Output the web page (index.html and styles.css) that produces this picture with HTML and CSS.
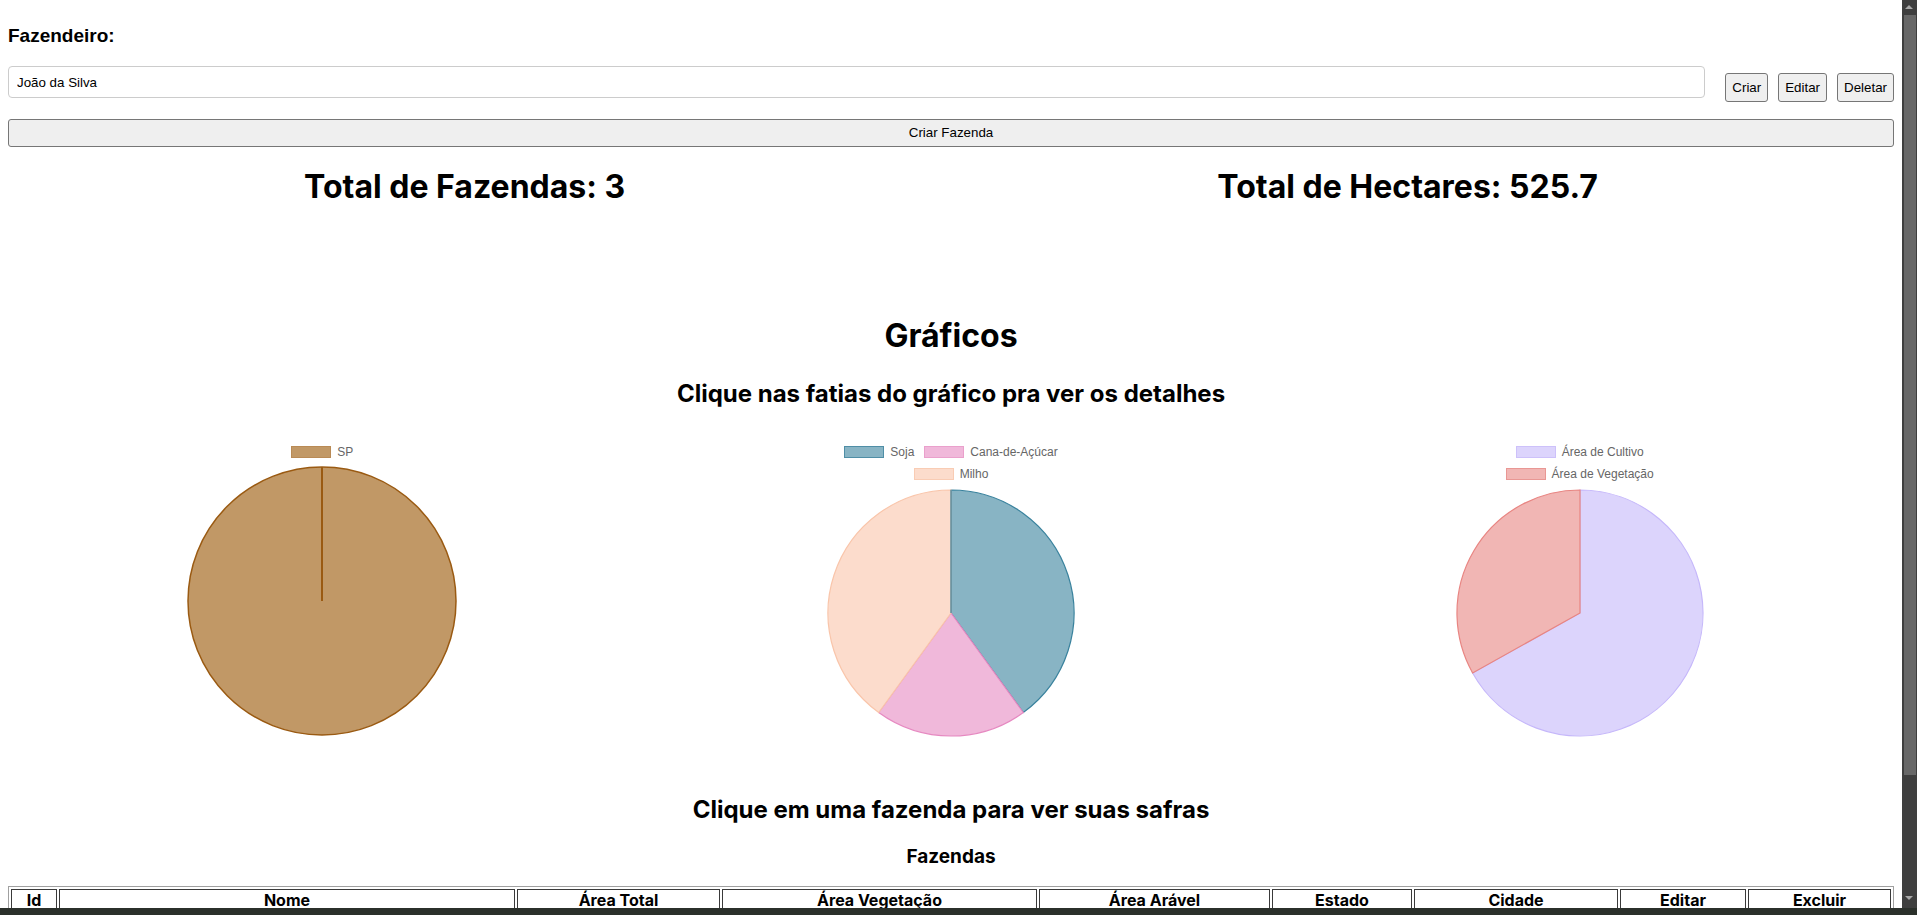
FILE: index.html
```html
<!DOCTYPE html>
<html lang="pt-BR">
<head>
<meta charset="utf-8">
<title>Fazendas</title>
<link rel="stylesheet" href="styles.css">
</head>
<body>
<div class="page">
  <div class="farmer-label">Fazendeiro:</div>
  <div class="farmer-row">
    <input class="farmer-input" type="text" value="João da Silva">
    <button class="btn">Criar</button>
    <button class="btn">Editar</button>
    <button class="btn">Deletar</button>
  </div>
  <button class="btn btn-wide">Criar Fazenda</button>

  <div class="stats">
    <h1 class="stat">Total de Fazendas: 3</h1>
    <h1 class="stat">Total de Hectares: 525.7</h1>
  </div>

  <h2 class="section-title">Gráficos</h2>
  <h3 class="section-sub">Clique nas fatias do gráfico pra ver os detalhes</h3>

  <div class="charts">
    <div class="chart">
      <div class="legend">
        <div class="legend-item"><span class="swatch sw-sp"></span>SP</div>
      </div>
      <svg class="pie pie-lg" viewBox="-135 -135 270 270">
        <circle cx="0" cy="0" r="134" fill="#c19866" stroke="#9a5a12" stroke-width="1.5"/>
        <line x1="0" y1="0" x2="0" y2="-134" stroke="#9a5a12" stroke-width="2"/>
      </svg>
    </div>
    <div class="chart">
      <div class="legend">
        <div class="legend-item"><span class="swatch sw-soja"></span>Soja</div>
        <div class="legend-item"><span class="swatch sw-cana"></span>Cana-de-Açúcar</div>
        <div class="legend-item"><span class="swatch sw-milho"></span>Milho</div>
      </div>
      <svg class="pie pie-sm" viewBox="-124 -124 248 248">
        <path d="M0 0 L0 -123 A123 123 0 0 1 72.3 99.5 Z" fill="#88b4c4" stroke="#39829d" stroke-width="1.2"/>
        <path d="M0 0 L72.3 99.5 A123 123 0 0 1 -72.3 99.5 Z" fill="#f0b8da" stroke="#e689c1" stroke-width="1.2"/>
        <path d="M0 0 L-72.3 99.5 A123 123 0 0 1 0 -123 Z" fill="#fcdccc" stroke="#f9c5aa" stroke-width="1.2"/>
        <line x1="0" y1="0" x2="0" y2="-123" stroke="#39829d" stroke-width="1.2"/>
      </svg>
    </div>
    <div class="chart">
      <div class="legend">
        <div class="legend-item"><span class="swatch sw-cult"></span>Área de Cultivo</div>
        <div class="legend-item"><span class="swatch sw-veg"></span>Área de Vegetação</div>
      </div>
      <svg class="pie pie-sm" viewBox="-124 -124 248 248">
        <path d="M0 0 L0 -123 A123 123 0 1 1 -107.4 60.0 Z" fill="#dcd4fc" stroke="#c5b7fa" stroke-width="1.2"/>
        <path d="M0 0 L-107.4 60.0 A123 123 0 0 1 0 -123 Z" fill="#f1b6b4" stroke="#e88582" stroke-width="1.2"/>
      </svg>
    </div>
  </div>

  <h3 class="section-sub table-intro">Clique em uma fazenda para ver suas safras</h3>
  <h4 class="table-title">Fazendas</h4>

  <table class="farms">
    <colgroup>
      <col class="c-id"><col class="c-nome"><col class="c-total"><col class="c-veg"><col class="c-ara"><col class="c-est"><col class="c-cid"><col class="c-edit"><col class="c-del">
    </colgroup>
    <thead>
      <tr>
        <th>Id</th><th>Nome</th><th>Área Total</th><th>Área Vegetação</th><th>Área Arável</th><th>Estado</th><th>Cidade</th><th>Editar</th><th>Excluir</th>
      </tr>
    </thead>
    <tbody>
      <tr><td>1</td><td>Fazenda Boa Vista</td><td>200.5</td><td>60</td><td>140.5</td><td>SP</td><td>Ribeirão Preto</td><td><button class="btn">Editar</button></td><td><button class="btn">Excluir</button></td></tr>
      <tr><td>2</td><td>Fazenda Santa Clara</td><td>175.2</td><td>55</td><td>120.2</td><td>SP</td><td>Campinas</td><td><button class="btn">Editar</button></td><td><button class="btn">Excluir</button></td></tr>
      <tr><td>3</td><td>Fazenda São José</td><td>150</td><td>60</td><td>90</td><td>SP</td><td>Piracicaba</td><td><button class="btn">Editar</button></td><td><button class="btn">Excluir</button></td></tr>
    </tbody>
  </table>
</div>

<div class="scrollbar">
  <div class="sb-arrow sb-up"></div>
  <div class="sb-thumb"></div>
  <div class="sb-arrow sb-down"></div>
</div>
<div class="taskbar-edge"></div>
</body>
</html>
```

FILE: styles.css
```css
html, body {
  overflow: hidden;
  height: 100%;
}
body {
  margin: 8px 23px 8px 8px;
  background: #ffffff;
  color: #000000;
  font-family: Inter, "Liberation Sans", Arial, sans-serif;
}
.page {
  display: flex;
  flex-direction: column;
}

.farmer-label {
  margin-top: 17px;
  font-family: "Liberation Sans", Arial, sans-serif;
  font-weight: 700;
  font-size: 19px;
  line-height: 22px;
}
.farmer-row {
  display: flex;
  align-items: flex-start;
  margin-top: 19px;
  gap: 10px;
}
.farmer-input {
  flex: 1;
  height: 32px;
  box-sizing: border-box;
  margin: 0 10px 0 0;
  padding: 0 8px;
  border: 1px solid #cccccc;
  border-radius: 4px;
  font-family: "Liberation Sans", Arial, sans-serif;
  font-size: 13.33px;
  color: #000;
  background: #fff;
  outline: none;
}
.btn {
  margin: 7px 0 0 0;
  padding: 6px 6px;
  border: 1px solid #767676;
  border-radius: 3px;
  background: #efefef;
  font-family: "Liberation Sans", Arial, sans-serif;
  font-size: 13.33px;
  line-height: 15px;
  color: #000;
}
.btn-wide {
  margin-top: 17px;
  width: 100%;
  padding: 5px 6px;
  line-height: 16px;
}

.stats {
  display: flex;
  justify-content: space-around;
  margin-top: 20px;
}
.stat {
  margin: 0;
  font-size: 32px;
  font-weight: 700;
  line-height: 39px;
}

.section-title {
  margin: 110px 0 0;
  text-align: center;
  font-size: 32px;
  font-weight: 700;
  line-height: 39px;
}
.section-sub {
  margin: 24px 0 0;
  text-align: center;
  font-size: 24px;
  font-weight: 700;
  line-height: 29px;
}

.charts {
  display: grid;
  grid-template-columns: 1fr 1fr 1fr;
  margin-top: 28px;
}
.chart {
  height: 301px;
  display: flex;
  flex-direction: column;
  align-items: center;
}
.legend {
  width: 260px;
  box-sizing: border-box;
  padding: 10px 0;
  display: flex;
  flex-wrap: wrap;
  justify-content: center;
  column-gap: 10px;
  row-gap: 10px;
}
.legend-item {
  display: flex;
  align-items: center;
  height: 12px;
  font-family: "Liberation Sans", Helvetica, Arial, sans-serif;
  font-size: 12px;
  line-height: 12px;
  color: #666666;
}
.swatch {
  width: 40px;
  height: 12px;
  box-sizing: border-box;
  border: 1px solid;
  margin-right: 6px;
}
.sw-sp { background: #c19866; border-color: #b98a55; }
.sw-soja { background: #88b4c4; border-color: #4f8ea6; }
.sw-cana { background: #f0b8da; border-color: #eaa0cc; }
.sw-milho { background: #fcdccc; border-color: #f9ccb4; }
.sw-cult { background: #dcd4fc; border-color: #cdc1fa; }
.sw-veg { background: #f1b6b4; border-color: #e99794; }

.pie {
  display: block;
}
.pie-lg {
  width: 270px;
  height: 270px;
  margin-top: -2px;
}
.pie-sm {
  width: 248px;
  height: 248px;
  margin-top: -1px;
}

.table-intro {
  margin-top: 58px;
}
.table-title {
  margin: 21px 0 0;
  text-align: center;
  font-size: 19px;
  font-weight: 700;
  line-height: 23px;
}

.farms {
  margin-top: 18px;
  width: 100%;
  table-layout: fixed;
  border: 1px solid #a0a0a0;
  border-spacing: 2px;
  font-family: Inter, "Liberation Sans", Arial, sans-serif;
}
.farms th, .farms td {
  border: 1px solid #3a3a3a;
  padding: 1px;
  text-align: center;
  font-size: 16px;
  line-height: 19px;
}
.farms th { font-weight: 700; }
.farms td .btn { margin: 0; }
.c-id { width: 46px; }
.c-nome { width: 456px; }
.c-total { width: 203px; }
.c-veg { width: 315px; }
.c-ara { width: 231px; }
.c-est { width: 140px; }
.c-cid { width: 204px; }
.c-edit { width: 126px; }
.c-del { width: 143px; }

.scrollbar {
  position: fixed;
  top: 0;
  right: 0;
  width: 15px;
  height: 908px;
  background: #3f3f3f;
}
.sb-thumb {
  position: absolute;
  top: 15px;
  left: 2px;
  right: 1px;
  height: 760px;
  background: #686868;
}
.sb-arrow {
  position: absolute;
  left: 3px;
  width: 0;
  height: 0;
  border-left: 4px solid transparent;
  border-right: 4px solid transparent;
}
.sb-up {
  top: 5px;
  border-bottom: 4px solid #a8a8a8;
}
.sb-down {
  top: 896px;
  border-top: 4px solid #a8a8a8;
}
.taskbar-edge {
  position: fixed;
  left: 0;
  right: 0;
  bottom: 0;
  height: 7px;
  background: #2b302b;
  z-index: 10;
}
```
